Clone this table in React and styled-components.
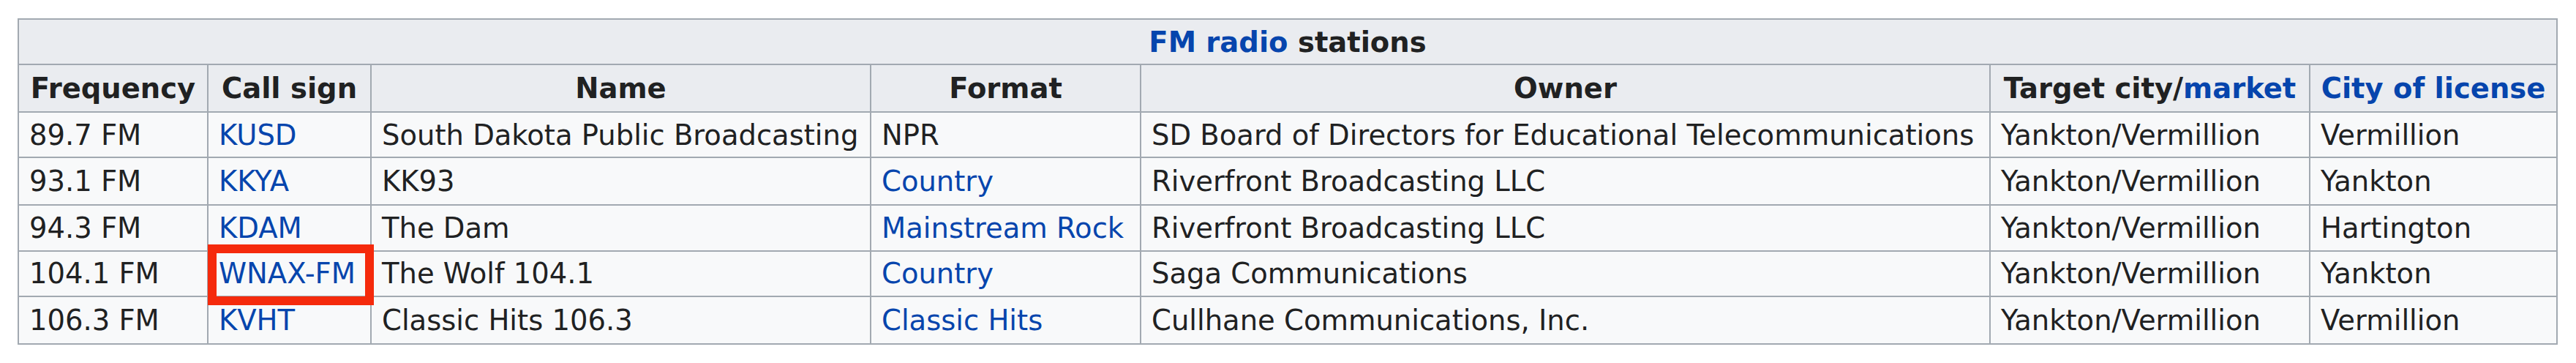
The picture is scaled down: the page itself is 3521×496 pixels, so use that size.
import React from 'react';
import styled, { createGlobalStyle } from 'styled-components';

const Global = createGlobalStyle`
  html, body { margin: 0; padding: 0; background: #ffffff; }
  body { font-family: "DejaVu Sans", sans-serif; color: #202122; }
`;

const Page = styled.div`
  padding: 25px 0 0 24px;
`;

const Table = styled.table`
  border-collapse: collapse;
  table-layout: fixed;
  width: 3472px;
  border: 2px solid #a2a9b1;
  background: #f8f9fa;
  font-size: 38.5px;
  line-height: 45px;
  color: #202122;
`;

const Row = styled.tr`
  height: ${(p) => p.$h}px;
`;

const HeadCell = styled.th`
  background: #eaecf0;
  border: 2px solid #a2a9b1;
  padding: 0 14px;
  font-weight: bold;
  text-align: center;
  white-space: nowrap;
`;

const Cell = styled.td`
  position: ${(p) => (p.$marked ? 'relative' : 'static')};
  border: 2px solid #a2a9b1;
  padding: 0 14px;
  white-space: nowrap;
  text-align: left;
  background: #f8f9fa;
`;

const Link = styled.a`
  color: #0645ad;
  text-decoration: none;
`;

const Highlight = styled.span`
  position: absolute;
  z-index: 5;
  left: -1px;
  right: -5px;
  top: -10px;
  bottom: -13px;
  border: 12px solid #f52a0c;
  pointer-events: none;
`;

const widths = [259, 223, 683, 369, 1161, 437, 338];

const rows = [
  { h: 62.3, freq: '89.7 FM', call: 'KUSD', name: 'South Dakota Public Broadcasting', format: 'NPR', formatLink: false, owner: 'SD Board of Directors for Educational Telecommunications', target: 'Yankton/Vermillion', city: 'Vermillion' },
  { h: 65, freq: '93.1 FM', call: 'KKYA', name: 'KK93', format: 'Country', formatLink: true, owner: 'Riverfront Broadcasting LLC', target: 'Yankton/Vermillion', city: 'Yankton' },
  { h: 62.7, freq: '94.3 FM', call: 'KDAM', name: 'The Dam', format: 'Mainstream Rock', formatLink: true, owner: 'Riverfront Broadcasting LLC', target: 'Yankton/Vermillion', city: 'Hartington' },
  { h: 62, freq: '104.1 FM', call: 'WNAX-FM', marked: true, name: 'The Wolf 104.1', format: 'Country', formatLink: true, owner: 'Saga Communications', target: 'Yankton/Vermillion', city: 'Yankton' },
  { h: 64.8, freq: '106.3 FM', call: 'KVHT', name: 'Classic Hits 106.3', format: 'Classic Hits', formatLink: true, owner: 'Cullhane Communications, Inc.', target: 'Yankton/Vermillion', city: 'Vermillion' },
];

export default function App() {
  return (
    <>
      <Global />
      <Page>
        <Table>
          <colgroup>
            {widths.map((w, i) => (
              <col key={i} style={{ width: w }} />
            ))}
          </colgroup>
          <thead>
            <Row $h={62}>
              <HeadCell colSpan={7}>
                <Link href="#">FM radio</Link> stations
              </HeadCell>
            </Row>
            <Row $h={65}>
              <HeadCell>Frequency</HeadCell>
              <HeadCell>Call sign</HeadCell>
              <HeadCell>Name</HeadCell>
              <HeadCell>Format</HeadCell>
              <HeadCell>Owner</HeadCell>
              <HeadCell>
                Target city/<Link href="#">market</Link>
              </HeadCell>
              <HeadCell>
                <Link href="#">City of license</Link>
              </HeadCell>
            </Row>
          </thead>
          <tbody>
            {rows.map((r) => (
              <Row key={r.freq} $h={r.h}>
                <Cell>{r.freq}</Cell>
                <Cell $marked={r.marked}>
                  <Link href="#">{r.call}</Link>
                  {r.marked && <Highlight />}
                </Cell>
                <Cell>{r.name}</Cell>
                <Cell>{r.formatLink ? <Link href="#">{r.format}</Link> : r.format}</Cell>
                <Cell>{r.owner}</Cell>
                <Cell>{r.target}</Cell>
                <Cell>{r.city}</Cell>
              </Row>
            ))}
          </tbody>
        </Table>
      </Page>
    </>
  );
}
